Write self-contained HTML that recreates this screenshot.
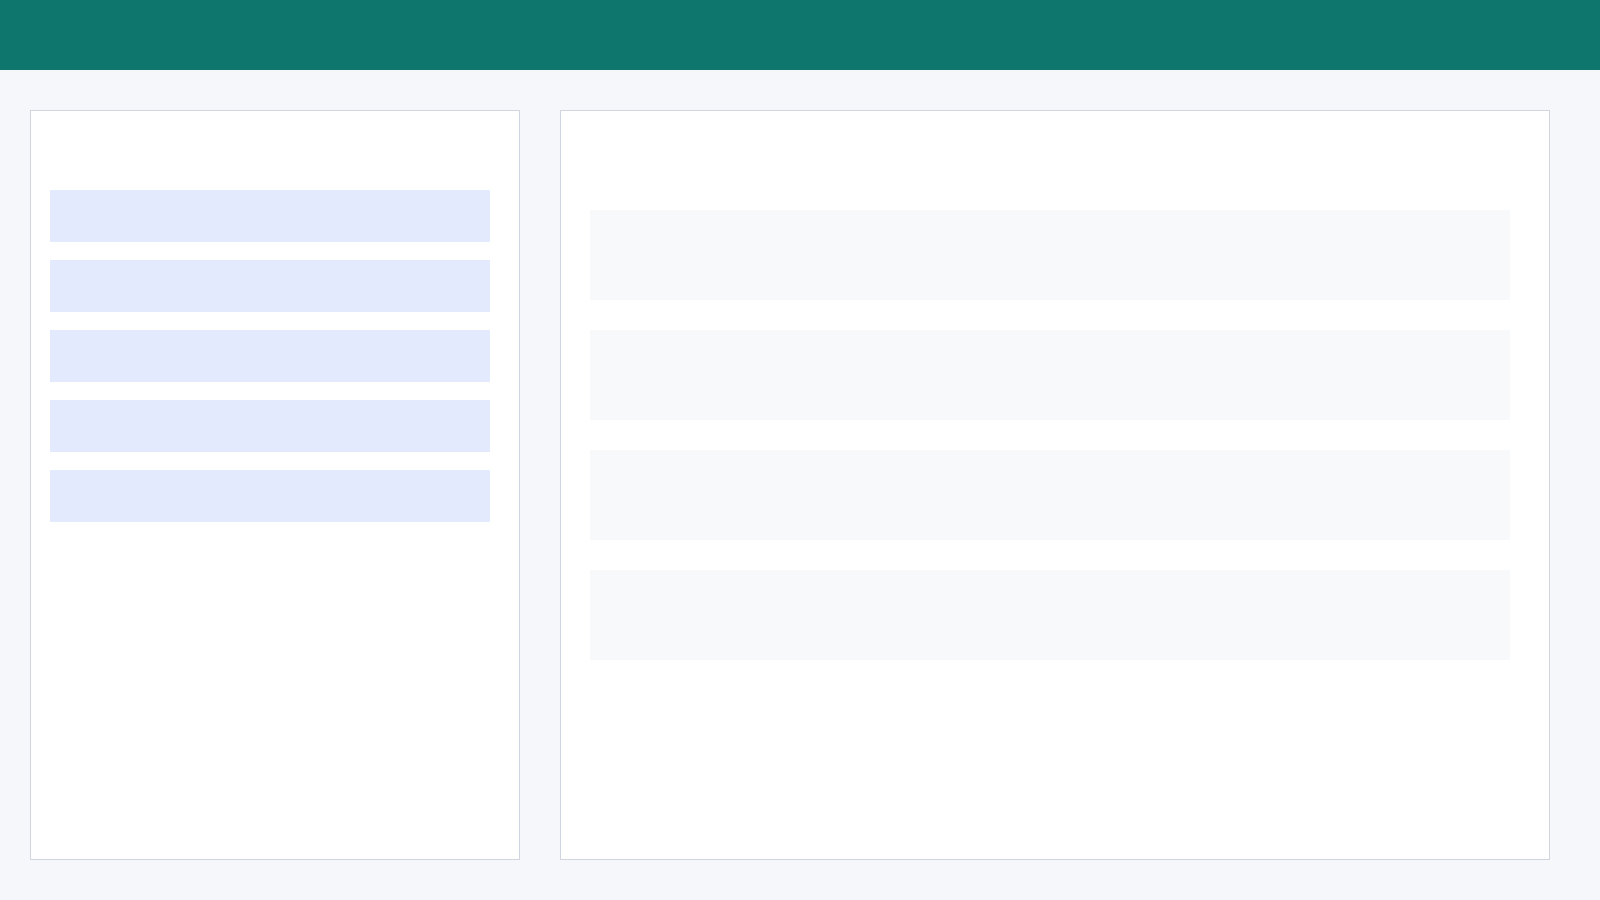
<!DOCTYPE html>
<html><head><meta charset="utf-8"><style>
body{margin:0;width:1600px;height:900px;background:#f5f7fa;position:relative;overflow:hidden;font-family:"Liberation Sans",sans-serif}
.hdr{position:absolute;left:0;top:0;width:1600px;height:70px;background:#0f766e}
.p{position:absolute;background:#fff;border:1px solid #d0d5e0;box-sizing:border-box}
.a{position:absolute;left:50px;width:440px;height:52px;background:#e3eafd}
.b{position:absolute;left:590px;width:920px;height:90px;background:#f8f9fb}
</style></head><body>
<div class="hdr"></div>
<div class="p" style="left:30px;top:110px;width:490px;height:750px"></div>
<div class="p" style="left:560px;top:110px;width:990px;height:750px"></div>
<div class="a" style="top:190px"></div>
<div class="a" style="top:260px"></div>
<div class="a" style="top:330px"></div>
<div class="a" style="top:400px"></div>
<div class="a" style="top:470px"></div>
<div class="b" style="top:210px"></div>
<div class="b" style="top:330px"></div>
<div class="b" style="top:450px"></div>
<div class="b" style="top:570px"></div>
</body></html>
